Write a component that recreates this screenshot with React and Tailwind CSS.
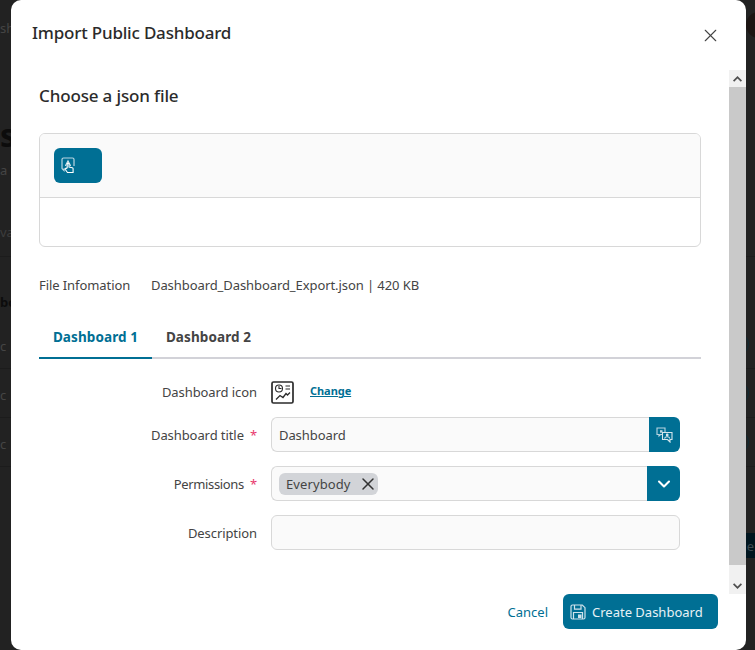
import { X, ChevronDown } from "lucide-react";

const font = { fontFamily: '"Noto Sans", sans-serif' };

const HandIcon = () => (
  <svg width="16" height="17" viewBox="0 0 16 17" fill="none" stroke="#b9d6e1" strokeWidth="1.200">
    <path d="M4.500 12H3l0 1.500L1.500 12A1 1 0 0 1 1 11V2.500A1.500 1.500 0 0 1 2.500 1h9A1.500 1.500 0 0 1 13 2.500V9" />
    <path d="M4.500 9c.3-2 1.500-2.500 2.500-5 1 2.500 2.200 3 2.500 5" stroke="#d5e6ec" />
    <path d="M6.200 10.500V7.200a.9.9 0 0 1 1.800 0V10l3.300.7a1 1 0 0 1 .8 1V15.500H6.500L4.300 12.500a.9.900 0 0 1 1.400-1.100z" fill="#006f94" stroke="#fff" strokeWidth="1.100" />
  </svg>
);

const TranslateIcon = () => (
  <svg width="17" height="16" viewBox="0 0 17 16" fill="none" stroke="#b9d6e1" strokeWidth="1.100">
    <path d="M1 1h8v6.500H4.500L3 9V7.500H1z" />
    <path d="M4 3.200h2.500v2.500H4z" fill="#b9d6e1" stroke="none" />
    <path d="M6.500 5.500h9.500v7h-2V15l-2.500-2.500H6.500z" fill="#006f94" stroke="#d5e6ec" />
    <circle cx="11.200" cy="8" r="1.400" fill="#d5e6ec" stroke="none" />
    <path d="M8.500 11.500c.5-1.500 1.500-1.800 2.700-1.800s2.200.3 2.700 1.800" stroke="#d5e6ec" />
  </svg>
);

const SaveIcon = () => (
  <svg width="16" height="16" viewBox="0 0 16 16" fill="none" stroke="#cfe3ec" strokeWidth="1.200">
    <path d="M2.500 1h9.800L15 3.700V13.500a1.500 1.500 0 0 1-1.500 1.500h-11A1.500 1.500 0 0 1 1 13.500v-11A1.500 1.500 0 0 1 2.500 1z" />
    <path d="M4.500 1v4.200h6.500V1M3.500 15V8.500h9V15" />
    <rect x="8" y="10.500" width="3.500" height="3.500" fill="#cfe3ec" stroke="none" />
  </svg>
);

const DashIcon = () => (
  <svg width="23" height="23" viewBox="0 0 23 23" fill="none" stroke="#2b2b2b" strokeWidth="1.100">
    <rect x="1" y="1" width="21" height="21" rx="1.500" strokeWidth="1.700" />
    <circle cx="8" cy="7.500" r="3.500" />
    <path d="M8 5v2.500h2.500" />
    <path d="M14.500 5h4.500M14.500 8h4.500" />
    <path d="M5 18.500l4-4 3 2 3-4 1.500 1.500 2.500-2.500" strokeWidth="1.300" />
  </svg>
);

const Row = ({ label, required, children }) => (
  <div className="flex items-center">
    <div className="w-[232px] pr-[14px] pt-[2px] text-right text-[13px] tracking-[-0.08px] text-[#444]">
      {label}
      {required && <span className="ml-[6px] text-[#e8386d]">*</span>}
    </div>
    <div className="flex-1">{children}</div>
  </div>
);

const BgRow = ({ text }) => (
  <div className="flex h-[49px] items-center justify-between border-b border-[#1c1c1c] text-[#454545]">
    <span className="pt-[4px]">{text}</span>
    <div className="mr-[6px] h-[22px] w-[22px] rounded-full border border-[#0f2a33]" />
  </div>
);

const BackgroundPage = () => (
  <div className="absolute inset-0 flex flex-col bg-[#222] text-[13px] leading-[18px]">
    <div className="flex h-[120px] justify-between">
      <span className="pt-[19px] text-[#454545]">sh</span>
      <div className="mt-[12px] h-[26px] w-[26px] -translate-x-[-17px] rounded-full bg-[#1c1513]" />
    </div>
    <div className="h-[36px] text-[32px] font-bold leading-[30px] text-[#0c0c0c]">s</div>
    <div className="h-[62px] pt-[5px] text-[#454545]">a</div>
    <div className="h-[39px] border-b border-[#1c1c1c] pt-[5px] text-[#3d3d3d]">va</div>
    <div className="h-[63px] pt-[36px] font-bold text-[#0c0c0c]">bo</div>
    <BgRow text="c" />
    <BgRow text="c" />
    <BgRow text="c" />
    <div className="ml-auto mt-[66px] flex h-[25px] w-[30px] items-center justify-end bg-[#00151f] pr-[1px] text-[#3d4a50]">le</div>
  </div>
);

export default function App() {
  return (
    <div className="relative h-[650px] w-[755px] overflow-hidden" style={font}>
      <BackgroundPage />

      <div className="absolute left-[11px] top-0 flex h-[650px] w-[735px] flex-col rounded-[10px] bg-white">
        {/* Header */}
        <div className="flex h-[70px] items-center justify-between pb-[4px] pl-[21px] pr-[25px]">
          <h2 className="text-[17px] font-medium tracking-[-0.2px] text-[#2b2b2b]">Import Public Dashboard</h2>
          <X size={21} strokeWidth={1.300} className="mt-[4px] text-[#444]" />
        </div>

        {/* Body */}
        <div className="flex h-[524px]">
          <div className="flex-1 pl-[28px] pr-[28px]">
            <h3 className="mt-[12px] text-[17px] font-medium leading-[28px] tracking-[-0.15px] text-[#2b2b2b]">Choose a json file</h3>

            <div className="mt-[23px] h-[114px] overflow-hidden rounded-[6px] border border-[#d8d8d8]">
              <div className="flex h-[64px] items-center border-b border-[#d8d8d8] bg-[#fafafa] pl-[14px]">
                <div className="flex h-[35px] w-[48px] items-center rounded-[6px] bg-[#006f94] pl-[7px]">
                  <HandIcon />
                </div>
              </div>
            </div>

            <div className="mt-[28px] flex text-[13px] leading-[20px] tracking-[-0.08px] text-[#444]">
              <div className="w-[112px]">File Infomation</div>
              <div>Dashboard_Dashboard_Export.json | 420 KB</div>
            </div>

            <div className="mt-[21px] flex h-[43px] border-b-2 border-[#d2d2d8] pt-[1px] text-[13.500px] font-bold tracking-[0.1px]">
              <div className="-mb-[2px] flex w-[113px] items-center justify-center border-b-[2px] border-[#006f94] text-[#006f94]">
                Dashboard 1
              </div>
              <div className="flex w-[113px] items-center justify-center text-[#444]">Dashboard 2</div>
            </div>

            <div className="flex w-[641px] flex-col">
              <div className="mt-[21px]">
                <Row label="Dashboard icon">
                  <div className="flex items-center gap-[16px] pt-[1px]">
                    <DashIcon />
                    <span className="-mt-[2px] text-[11px] font-bold tracking-[-0.05px] text-[#006f94] underline">Change</span>
                  </div>
                </Row>
              </div>

              <div className="mt-[13px]">
                <Row label="Dashboard title" required>
                  <div className="flex h-[35px]">
                    <div className="flex flex-1 items-center rounded-l-[6px] border border-r-0 border-[#d8d8d8] bg-[#fafafa] pl-[7px] pt-[2px] text-[13px] tracking-[-0.08px] text-[#444]">
                      Dashboard
                    </div>
                    <div className="flex w-[31px] items-center justify-center rounded-r-[6px] bg-[#006f94]">
                      <TranslateIcon />
                    </div>
                  </div>
                </Row>
              </div>

              <div className="mt-[14px]">
                <Row label={<span className="tracking-[-0.35px]">Permissions</span>} required>
                  <div className="flex h-[35px]">
                    <div className="flex flex-1 items-center rounded-l-[6px] border border-r-0 border-[#d8d8d8] bg-[#fafafa] pl-[7px]">
                      <div className="flex h-[22px] items-center gap-[7px] rounded-[6px] bg-[#d2d4d8] pl-[7px] text-[13px] tracking-[0.1px] text-[#444]">
                        <span className="pt-[2px]">Everybody</span>
                        <X size={20} strokeWidth={1.800} className="text-[#333]" />
                      </div>
                    </div>
                    <div className="flex w-[33px] items-center justify-center rounded-r-[6px] bg-[#006f94]">
                      <ChevronDown size={20} strokeWidth={2.500} className="text-white" />
                    </div>
                  </div>
                </Row>
              </div>

              <div className="mt-[14px]">
                <Row label="Description">
                  <div className="h-[35px] rounded-[6px] border border-[#d8d8d8] bg-[#fafafa]" />
                </Row>
              </div>
            </div>
          </div>

          {/* Scrollbar */}
          <div className="flex w-[17px] flex-col bg-[#f1f1f1]">
            <div className="flex h-[17px] items-center justify-center">
              <svg width="9" height="6" viewBox="0 0 9 6" fill="#505050"><path d="M4.500 0L9 4.500 7.800 5.700 4.500 2.400 1.200 5.700 0 4.500z" /></svg>
            </div>
            <div className="h-[478px] bg-[#c9c9c9]" />
            <div className="flex-1" />
            <div className="flex h-[17px] items-center justify-center">
              <svg width="9" height="6" viewBox="0 0 9 6" fill="#505050"><path d="M4.500 6L0 1.500 1.200 .3 4.500 3.600 7.800 .3 9 1.500z" /></svg>
            </div>
          </div>
        </div>

        {/* Footer */}
        <div className="flex flex-1 items-start justify-end pr-[28px]">
          <div className="flex items-center">
            <span className="mr-[15px] pt-[2px] text-[13px] text-[#006f94]">Cancel</span>
            <div className="flex h-[35px] w-[155px] items-center gap-[6px] rounded-[6px] bg-[#006f94] pl-[7px] text-[13px] text-[#e8f2f6]">
              <SaveIcon />
              <span className="pt-[2px]">Create Dashboard</span>
            </div>
          </div>
        </div>
      </div>
    </div>
  );
}
